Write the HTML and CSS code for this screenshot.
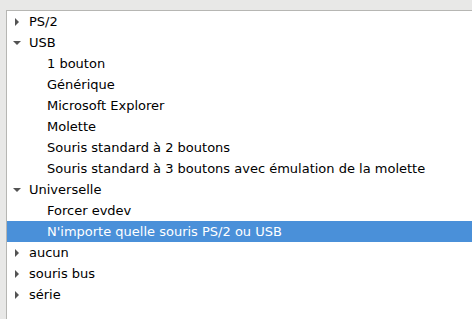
FILE: index.html
```html
<!DOCTYPE html>
<html lang="fr">
<head>
    <meta charset="UTF-8">
    <title>Souris</title>
    <link rel="stylesheet" href="styles.css">
</head>
<body>
    <div class="tree">
        <div class="row"><span class="arrow closed"></span><span class="label">PS/2</span></div>
        <div class="row"><span class="arrow open"></span><span class="label">USB</span></div>
        <div class="row child"><span class="label">1 bouton</span></div>
        <div class="row child"><span class="label">Générique</span></div>
        <div class="row child"><span class="label">Microsoft Explorer</span></div>
        <div class="row child"><span class="label">Molette</span></div>
        <div class="row child"><span class="label">Souris standard à 2 boutons</span></div>
        <div class="row child"><span class="label">Souris standard à 3 boutons avec émulation de la molette</span></div>
        <div class="row"><span class="arrow open"></span><span class="label">Universelle</span></div>
        <div class="row child"><span class="label">Forcer evdev</span></div>
        <div class="row child selected"><span class="label">N'importe quelle souris PS/2 ou USB</span></div>
        <div class="row"><span class="arrow closed"></span><span class="label">aucun</span></div>
        <div class="row"><span class="arrow closed"></span><span class="label">souris bus</span></div>
        <div class="row"><span class="arrow closed"></span><span class="label">série</span></div>
    </div>
</body>
</html>
```

FILE: styles.css
```css
* {
    margin: 0;
    padding: 0;
    box-sizing: border-box;
}

html, body {
    height: 100%;
}

body {
    background-color: #e8e8e7;
    font-family: 'DejaVu Sans', sans-serif;
    font-size: 13px;
    color: #000;
    padding: 10px 0 0 6px;
}

.tree {
    background-color: #fff;
    border-top: 1px solid #b6b6b3;
    border-left: 1px solid #b6b6b3;
    height: 100%;
}

.row {
    display: flex;
    align-items: center;
    height: 21px;
    padding-left: 8px;
}

.row.child {
    padding-left: 40px;
}

.row.selected {
    background-color: #4a90d9;
    color: #fff;
}

.arrow {
    width: 14px;
    height: 16px;
    position: relative;
}

.arrow::before {
    content: "";
    position: absolute;
    width: 0;
    height: 0;
}

.arrow.closed::before {
    left: 0;
    top: 4px;
    border-top: 4px solid transparent;
    border-bottom: 4px solid transparent;
    border-left: 4px solid #535353;
}

.arrow.open::before {
    left: -2px;
    top: 6px;
    border-left: 4px solid transparent;
    border-right: 4px solid transparent;
    border-top: 4px solid #535353;
}
```
